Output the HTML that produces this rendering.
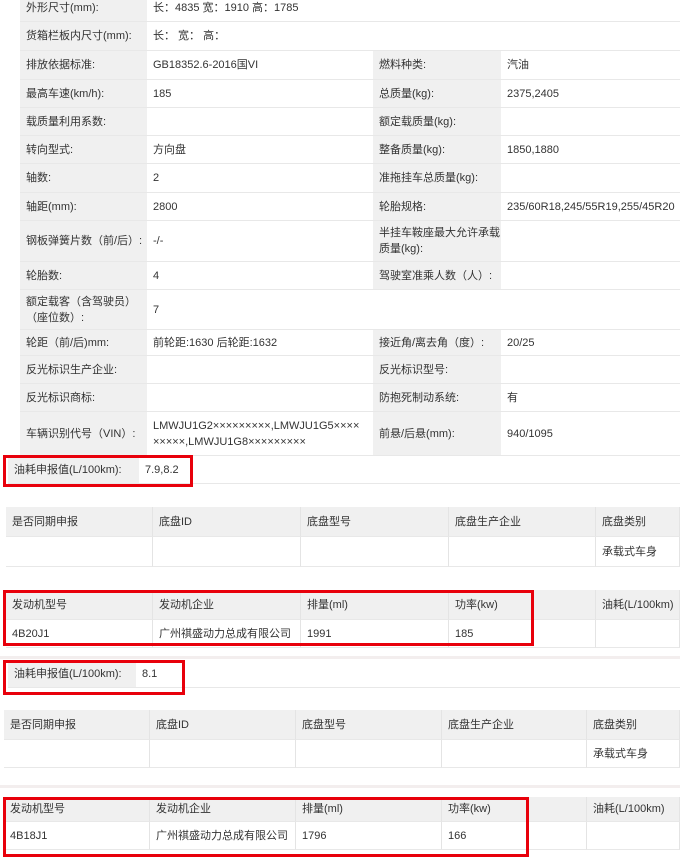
<!DOCTYPE html>
<html><head><meta charset="utf-8"><style>
*{margin:0;padding:0;box-sizing:border-box}
body{width:680px;height:842px;overflow:hidden;background:#fff;position:relative;font-family:"Liberation Sans","Noto Sans CJK SC",sans-serif;font-size:11px;color:#333}
.c{position:absolute;display:flex;align-items:center;padding-left:6px;line-height:16px;border-bottom:1px solid #e8e8e8;white-space:nowrap;overflow:hidden}
.g{background:#f0f0f0}
.r{position:absolute;border:3px solid #e8000b}
.h{position:absolute;background:#e8e8e8}
</style></head><body>
<div id="m"></div>
<script>
var rows=[[-6,22,"外形尺寸(mm):","长：4835 宽：1910 高：1785",null,null,1],
[22,51,"货箱栏板内尺寸(mm):","长： 宽： 高：",null,null,1],
[51,80,"排放依据标准:","GB18352.6-2016国VI","燃料种类:","汽油"],
[80,108,"最高车速(km/h):","185","总质量(kg):","2375,2405"],
[108,136,"载质量利用系数:","","额定载质量(kg):",""],
[136,164,"转向型式:","方向盘","整备质量(kg):","1850,1880"],
[164,193,"轴数:","2","准拖挂车总质量(kg):",""],
[193,221,"轴距(mm):","2800","轮胎规格:","235/60R18,245/55R19,255/45R20"],
[221,262,"钢板弹簧片数（前/后）:","-/-","半挂车鞍座最大允许承载<br>质量(kg):",""],
[262,290,"轮胎数:","4","驾驶室准乘人数（人）:",""],
[290,330,"额定载客（含驾驶员）<br>（座位数）:","7",null,null,1],
[330,356,"轮距（前/后)mm:","前轮距:1630 后轮距:1632","接近角/离去角（度）:","20/25"],
[356,384,"反光标识生产企业:","","反光标识型号:",""],
[384,412,"反光标识商标:","","防抱死制动系统:","有"],
[412,456,"车辆识别代号（VIN）:","LMWJU1G2×××××××××,LMWJU1G5××××<br>×××××,LMWJU1G8×××××××××","前悬/后悬(mm):","940/1095"]];
var h="";
function c(x,y,w,hh,t,g,extra){h+='<div class="c'+(g?' g':'')+'" style="left:'+x+'px;top:'+y+'px;width:'+w+'px;height:'+hh+'px;'+(extra||'')+'"><span>'+t+'</span></div>';}
rows.forEach(function(r){var y=r[0],hh=r[1]-r[0];
c(20,y,127,hh,r[2],1);
if(r[6]){c(147,y,533,hh,r[3],0);}
else{c(147,y,226,hh,r[3],0);c(373,y,128,hh,r[4],1);c(501,y,179,hh,r[5],0);}
});
c(8,456,131,28,"油耗申报值(L/100km):",1);c(139,456,541,28,"7.9,8.2",0);
h+='<div class="r" style="left:3px;top:455px;width:190px;height:32px"></div>';
function tbl(y,xs,hd,bd,h1,h2){for(var i=0;i<5;i++){c(xs[i],y,xs[i+1]-xs[i],h1,hd[i],1,'border-right:1px solid #e4e4e4');c(xs[i],y+h1,xs[i+1]-xs[i],h2,bd[i],0,'border-right:1px solid #e4e4e4');}}
var ch=["是否同期申报","底盘ID","底盘型号","底盘生产企业","底盘类别"],cb=["","","","","承载式车身"];
tbl(507,[6,153,301,449,596,680],ch,cb,30,30);
tbl(590,[6,153,301,449,596,680],["发动机型号","发动机企业","排量(ml)","功率(kw)","油耗(L/100km)"],["4B20J1","广州祺盛动力总成有限公司","1991","185",""],30,28);
h+='<div class="r" style="left:3px;top:590px;width:531px;height:56px"></div>';
h+='<div class="h" style="left:0;top:656px;width:680px;height:3px;background:#f3eeee"></div>';
c(8,661,128,27,"油耗申报值(L/100km):",1);c(136,661,544,27,"8.1",0);
h+='<div class="r" style="left:3px;top:660px;width:182px;height:35px"></div>';
tbl(710,[4,150,296,442,587,680],ch,cb,30,28);
h+='<div class="h" style="left:0;top:785px;width:680px;height:3px;background:#f3eeee"></div>';
tbl(797,[4,150,296,442,587,680],["发动机型号","发动机企业","排量(ml)","功率(kw)","油耗(L/100km)"],["4B18J1","广州祺盛动力总成有限公司","1796","166",""],25,28);
h+='<div class="r" style="left:3px;top:797px;width:526px;height:60px"></div>';
document.getElementById("m").innerHTML=h;
</script>
</body></html>
